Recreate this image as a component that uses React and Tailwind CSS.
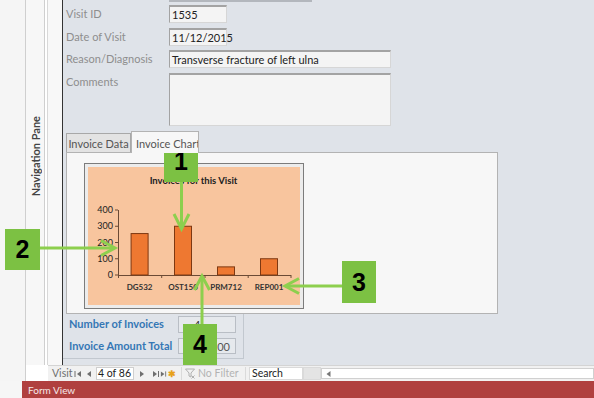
import React from "react";

function TextBox({ className = "", children }) {
  return (
    <div
      className={`bg-[#f4f4f4] border-t-2 border-l border-[#a3a3a3] border-r border-b border-r-[#d6d6d6] border-b-[#d6d6d6] text-[11px] text-[#222] leading-none pl-[2px] flex items-start pt-[2px] whitespace-nowrap ${className}`}
    >
      {children}
    </div>
  );
}

function Callout({ n, className }) {
  return (
    <div
      className={`absolute bg-[#7cc143] flex items-center justify-center text-black font-bold text-[25px] leading-none font-['Liberation_Sans',Arial,sans-serif] ${className}`}
    >
      {n}
    </div>
  );
}

function Chart() {
  const axis = "#6b4a35";
  const y0 = 108;
  const k = 0.1625;
  const bars = [
    { name: "DG532", v: 255, cx: 51.6 },
    { name: "OST150", v: 300, cx: 95 },
    { name: "PRM712", v: 50, cx: 138 },
    { name: "REP001", v: 100, cx: 181 },
  ];
  return (
    <svg width="211" height="138" className="block">
      <text x="105.5" y="17" textAnchor="middle" fontSize="9.5" fontWeight="700" fill="#222">
        Invoices for this Visit
      </text>
      {[400, 300, 200, 100, 0].map((t) => {
        const y = y0 - t * k;
        return (
          <g key={t}>
            <text x="25" y={y + 3.2} textAnchor="end" fontSize="9" fill="#222">
              {t}
            </text>
            <line x1="27" x2="30" y1={y} y2={y} stroke={axis} strokeWidth="1" />
          </g>
        );
      })}
      <line x1="30.5" x2="30.5" y1="43" y2={y0} stroke={axis} strokeWidth="1" />
      <line x1="30" x2="203" y1={y0 + 0.5} y2={y0 + 0.5} stroke={axis} strokeWidth="1" />
      {[30.5, 73.7, 117, 160.2, 203].map((x) => (
        <line key={x} x1={x} x2={x} y1={y0} y2={y0 + 3} stroke={axis} strokeWidth="1" />
      ))}
      {bars.map((b) => {
        const h = b.v * k;
        return (
          <g key={b.name}>
            <rect x={b.cx - 8.5} y={y0 - h} width="17" height={h} fill="#ee7831" stroke="#7d3812" strokeWidth="1" />
            <text x={b.cx} y="123" textAnchor="middle" fontSize="8" fontWeight="700" fill="#333">
              {b.name}
            </text>
          </g>
        );
      })}
    </svg>
  );
}

function Tri({ dir = "l", bar = false, color = "#6f6f6f" }) {
  return (
    <svg width="8" height="8" viewBox="0 0 8 8">
      {dir === "l" ? (
        <>
          {bar && <rect x="0.5" y="1" width="1" height="6" fill={color} />}
          <polygon points="7,1 3,4 7,7" fill={color} />
        </>
      ) : (
        <>
          <polygon points="1,1 5,4 1,7" fill={color} />
          {bar && <rect x="6" y="1" width="1" height="6" fill={color} />}
        </>
      )}
    </svg>
  );
}

export default function App() {
  return (
    <div className="relative w-[594px] h-[398px] overflow-hidden flex flex-col bg-[#f4f4f4] font-['Lato','Liberation_Sans',sans-serif]">
      {/* main area */}
      <div className="flex h-[365px]">
        <div className="w-[26px] bg-[#f5f5f5] border-r border-[#cfcfcf]" />
        <div className="w-[19px] bg-[#f7f7f7] border-r border-[#cfcfcf] flex justify-center items-start pt-[116px]">
          <span className="[writing-mode:vertical-rl] rotate-180 text-[11px] font-bold text-[#444] leading-none whitespace-nowrap">
            Navigation Pane
          </span>
        </div>
        <div className="w-[3px] bg-white border-r border-[#d8d8d8]" />
        <div className="w-[15px] bg-[#f8f8f8] border-r border-[#333]" />

        {/* form */}
        <div className="flex-1 bg-[#dfe3e9] flex flex-col">
          <div className="ml-[106px] w-[143px] h-[2px] bg-[#b3b7bd]" />
          <div className="pl-[3px] mt-[3px] flex flex-col">
            <div className="flex h-[18px]">
              <div className="w-[103px] text-[11px] text-[#8e8e8e] pt-[3px] leading-none">Visit ID</div>
              <TextBox className="w-[58px] h-[18px]">1535</TextBox>
            </div>
            <div className="flex h-[18px] mt-[5px]">
              <div className="w-[103px] text-[11px] text-[#8e8e8e] pt-[3px] leading-none">Date of Visit</div>
              <TextBox className="w-[58px] h-[18px]">11/12/2015</TextBox>
            </div>
            <div className="flex h-[18px] mt-[4px]">
              <div className="w-[103px] text-[11px] text-[#8e8e8e] pt-[3px] leading-none">Reason/Diagnosis</div>
              <TextBox className="w-[222px] h-[18px]">Transverse fracture of left ulna</TextBox>
            </div>
            <div className="flex h-[53px] mt-[5px]">
              <div className="w-[103px] text-[11px] text-[#8e8e8e] pt-[3px] leading-none">Comments</div>
              <TextBox className="w-[222px] h-[53px]" />
            </div>

            {/* tab control */}
            <div className="mt-[5px] flex flex-col">
              <div className="flex items-end h-[21px]">
                <div className="w-[65px] h-[19px] bg-[#e3e3e3] border border-[#a8a8a8] border-b-0 text-[11px] text-[#555] leading-none flex items-center justify-center whitespace-nowrap">
                  Invoice Data
                </div>
                <div className="relative z-10 -mb-px w-[68px] h-[22px] bg-[#f7f7f7] border border-[#b3b3b3] border-b-0 text-[11px] text-[#555] leading-none pl-[4px] pt-[6px] whitespace-nowrap overflow-hidden">
                  Invoice Chart
                </div>
              </div>
              <div className="w-[432px] h-[162px] bg-[#f7f7f7] border border-[#b3b3b3] pl-[17px] pt-[10px]">
                <div className="w-[220px] h-[146px] border border-[#7c7c7c] bg-[#ececec] p-[3px]">
                  <div className="w-full h-full bg-[#f8c59e]">
                    <Chart />
                  </div>
                </div>
              </div>
            </div>
          </div>

          {/* footer section */}
          <div className="w-[181px] h-[45px] border-r border-b border-[#c2c8cf] pl-[6px] pt-[2px] flex flex-col">
            <div className="flex h-[17px]">
              <div className="w-[109px] text-[11px] font-bold text-[#3577b5] pt-[2px] leading-none whitespace-nowrap">Number of Invoices</div>
              <div className="w-[58px] h-[17px] bg-[#e6e9ed] border border-[#b9bec5] text-[11px] text-[#333] leading-none pl-[15px] pt-[2px]">
                4
              </div>
            </div>
            <div className="flex h-[16px] mt-[5px]">
              <div className="w-[109px] text-[11px] font-bold text-[#3577b5] pt-[2px] leading-none whitespace-nowrap">Invoice Amount Total</div>
              <div className="w-[58px] h-[16px] bg-[#e6e9ed] border border-[#b9bec5] text-[11px] text-[#555] leading-none pr-[5px] pt-[2px] text-right">
                $705.00
              </div>
            </div>
          </div>
        </div>
      </div>

      {/* record navigation bar */}
      <div className="flex h-[16px]">
        <div className="w-[26px] bg-[#f5f5f5] border-r border-[#cfcfcf]" />
        <div className="w-[22px] bg-white" />
        <div className="flex-1 bg-[#f1f1f1] border-t border-[#d4d4d4] flex items-center text-[10.5px] leading-none whitespace-nowrap">
          <div className="w-[4px] shrink-0" />
          <div className="w-[21px] shrink-0 text-[#6f6f6f]">Visit</div>
          <div className="w-[10px] shrink-0 flex justify-center"><Tri dir="l" bar /></div>
          <div className="w-[10px] shrink-0 flex justify-center"><Tri dir="l" /></div>
          <div className="w-[3px] shrink-0" />
          <div className="w-[38px] shrink-0 h-[13px] bg-white border border-[#cfcfcf] text-[#222] pl-[1px] flex items-center">4 of 86</div>
          <div className="w-[17px] shrink-0 flex justify-center"><Tri dir="r" /></div>
          <div className="w-[9px] shrink-0 flex justify-center"><Tri dir="r" bar /></div>
          <div className="w-[16px] shrink-0 flex items-center justify-center gap-[1px]">
            <Tri dir="r" bar />
            <span className="text-[#e7a21c] text-[9px] font-bold leading-none">✱</span>
          </div>
          <div className="w-[6px] shrink-0 h-[13px] border-r border-[#dadada]" />
          <div className="w-[16px] shrink-0 flex justify-center">
            <svg width="11" height="11" viewBox="0 0 11 11">
              <polygon points="0.5,1 9.5,1 6,5 6,9 4,8 4,5" fill="none" stroke="#b0b0b0" strokeWidth="1" />
              <path d="M6.5 7.5 L9.5 10.5 M9.5 7.5 L6.5 10.5" stroke="#b0b0b0" strokeWidth="1" />
            </svg>
          </div>
          <div className="w-[40px] shrink-0 text-[#b3b3b3]">No Filter</div>
          <div className="w-[8px] shrink-0 h-[13px] border-r border-[#dadada]" />
          <div className="w-[3px] shrink-0" />
          <div className="w-[54px] shrink-0 h-[13px] bg-white border border-[#dadada] text-[#222] pl-[2px] flex items-center">Search</div>
          <div className="w-[18px] shrink-0 h-[13px] bg-[#e4e4e4] border border-[#dadada]" />
          <div className="flex-1 h-[11px] bg-white border border-[#d0d0d0] flex items-center pl-[4px]">
            <svg width="5" height="6" viewBox="0 0 5 6">
              <polygon points="4.5,0 0.5,3 4.5,6" fill="#777" />
            </svg>
          </div>
        </div>
      </div>

      {/* status bar */}
      <div className="flex h-[17px]">
        <div className="w-[22px] bg-[#f6f6f6]" />
        <div className="flex-1 bg-[#b0403f] text-[10px] text-[#f5e9e9] leading-none pl-[6px] flex items-center">
          Form View
        </div>
      </div>

      {/* callout arrows */}
      <svg className="absolute left-0 top-0 pointer-events-none" width="594" height="398">
        <g stroke="#8dcf4e" strokeWidth="3" fill="none" strokeLinejoin="miter">
          <line x1="181.5" y1="180" x2="181.5" y2="227" />
          <polyline points="174,214 181.5,229 189,214" />
          <line x1="40" y1="248" x2="113" y2="248" />
          <polyline points="101,240.5 115,248 101,255.5" />
          <line x1="342" y1="286" x2="287" y2="286" />
          <polyline points="299,278.5 285,286 299,293.5" />
          <line x1="202" y1="326" x2="202" y2="278" />
          <polyline points="194.5,290 202,276 209.5,290" />
        </g>
      </svg>
      <Callout n="1" className="left-[164px] top-[141px] w-[34px] h-[41px]" />
      <Callout n="2" className="left-[5px] top-[229px] w-[35px] h-[41px]" />
      <Callout n="3" className="left-[342px] top-[261px] w-[34px] h-[42px]" />
      <Callout n="4" className="left-[183px] top-[324px] w-[34px] h-[41px]" />
    </div>
  );
}
